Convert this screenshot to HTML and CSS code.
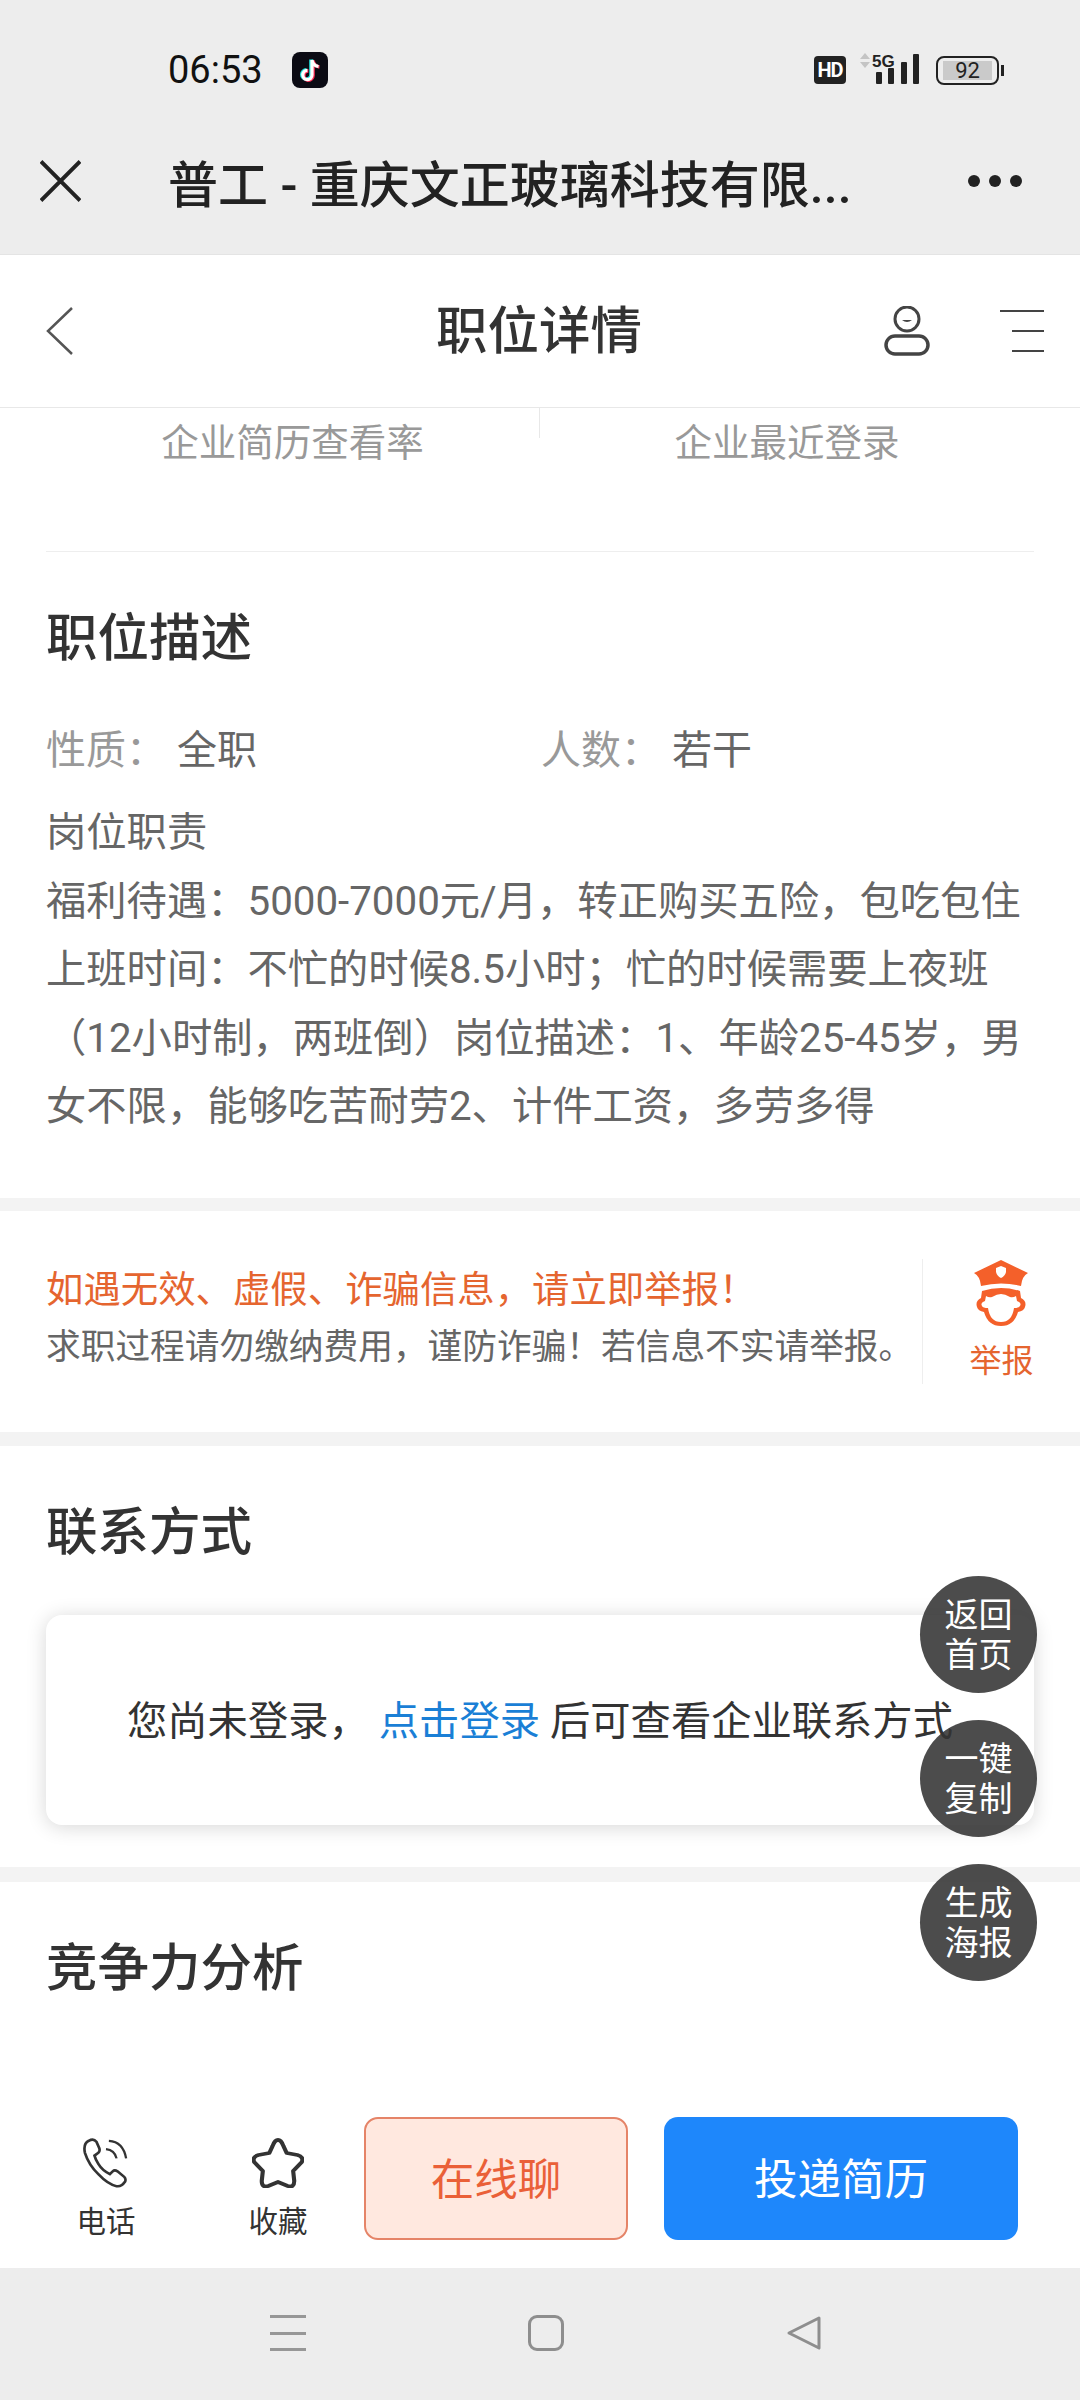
FILE: index.html
```html
<!DOCTYPE html>
<html lang="zh-CN">

<head>
    <meta charset="UTF-8">
    <meta name="viewport" content="width=device-width, initial-scale=1.0">
    <title>职位详情</title>
    <link rel="stylesheet" href="styles.css">
</head>

<body>
    <div class="screen">
        <div class="browser-bar">
            <div class="status-bar">
                <span class="time">06:53</span>
                <svg class="app-icon" viewBox="0 0 36 36">
                    <rect width="36" height="36" rx="8" fill="#0b0b14" />
                    <path d="M20 8v15a4.6 4.6 0 1 1-4.6-4.6M20 8c.6 3.500 3 6 6.500 6.500" fill="none" stroke="#25e4e0" stroke-width="3.600" transform="translate(-1 -.5)" />
                    <path d="M20 8v15a4.6 4.6 0 1 1-4.6-4.6M20 8c.6 3.500 3 6 6.500 6.500" fill="none" stroke="#fe2c55" stroke-width="3.600" transform="translate(1 .5)" />
                    <path d="M20 8v15a4.6 4.6 0 1 1-4.6-4.6M20 8c.6 3.500 3 6 6.500 6.500" fill="none" stroke="#fff" stroke-width="3.200" />
                </svg>
                <div class="status-right">
                    <span class="hd">HD</span>
                    <svg class="signal" viewBox="0 0 62 34">
                        <path d="M7 0l5 6H2zM7 15L2 9h10z" fill="#c4c4c4" />
                        <text x="14" y="14" class="signal-text">5G</text>
                        <rect x="18" y="19" width="6" height="12" rx="1" fill="#222" />
                        <rect x="30" y="15" width="6" height="16" rx="1" fill="#222" />
                        <rect x="43" y="9" width="6" height="22" rx="1" fill="#222" />
                        <rect x="55" y="1" width="6" height="30" rx="1" fill="#222" />
                    </svg>
                    <div class="battery">
                        <div class="battery-level">92</div>
                    </div>
                    <span class="battery-tip"></span>
                </div>
            </div>
            <div class="title-bar">
                <svg class="close-icon" viewBox="0 0 42 42">
                    <path d="M1 1l40 40M41 1L1 41" stroke="#222" stroke-width="4" fill="none" />
                </svg>
                <div class="page-name">普工 - 重庆文正玻璃科技有限...</div>
                <div class="dots"><span></span><span></span><span></span></div>
            </div>
        </div>

        <div class="nav">
            <svg class="back-icon" viewBox="0 0 28 48">
                <path d="M26 1L2 24l24 23" stroke="#555" stroke-width="2.500" fill="none" />
            </svg>
            <h1 class="nav-title">职位详情</h1>
            <svg class="user-icon" viewBox="0 0 46 50">
                <circle cx="23" cy="13" r="12" stroke="#444" stroke-width="3" fill="none" />
                <path d="M18 14q5 4 10 0z" fill="#444" />
                <rect x="2" y="30" width="42" height="18" rx="9" stroke="#444" stroke-width="3.500" fill="none" />
            </svg>
            <div class="menu-icon"><span></span><span></span><span></span></div>
        </div>

        <div class="content">
            <div class="stats">
                <div class="stat stat-first">企业简历查看率</div>
                <div class="stat">企业最近登录</div>
            </div>

            <div class="section desc-section">
                <h2 class="section-title">职位描述</h2>
                <div class="meta">
                    <div class="meta-item"><span class="meta-label">性质：</span>全职</div>
                    <div class="meta-item"><span class="meta-label">人数：</span>若干</div>
                </div>
                <p class="desc">岗位职责<br>福利待遇：5000-7000元/月，转正购买五险，包吃包住<br>上班时间：不忙的时候8.5小时；忙的时候需要上夜班<br>（12小时制，两班倒）岗位描述：1、年龄25-45岁，男<br>女不限，能够吃苦耐劳2、计件工资，多劳多得</p>
            </div>

            <div class="report">
                <div class="report-text">
                    <div class="report-warn">如遇无效、虚假、诈骗信息，请立即举报！</div>
                    <div class="report-note">求职过程请勿缴纳费用，谨防诈骗！若信息不实请举报。</div>
                </div>
                <div class="report-btn">
                    <svg class="police-icon" viewBox="0 0 56 68">
                        <path d="M28 1l27 13q-6 3-7 13-20-5-40 0Q7 17 1 14z" fill="#f4602a" />
                        <path d="M23 9l5-2 5 2v4q-1 4-5 6-4-2-5-6z" fill="#fff" />
                        <path d="M9 32q19-6 38 0l1 7q6 3 4 9-1 4-7 5-4 14-17 14T11 53q-6-1-7-5-2-6 4-9z" fill="#f4602a" />
                        <path d="M13 37q3 2 6 1 5-3 9-3t9 3q3 1 6-1l1 5q5 2 3 5-1 2-6 2-2 14-13 14T15 49q-5 0-6-2-2-3 3-5z" fill="#fff" />
                    </svg>
                    <span class="report-label">举报</span>
                </div>
            </div>

            <div class="section contact-section">
                <h2 class="section-title">联系方式</h2>
                <div class="login-card">您尚未登录， <a class="login-link">点击登录</a> 后可查看企业联系方式</div>
            </div>

            <div class="section rival-section">
                <h2 class="section-title">竞争力分析</h2>
            </div>
        </div>

        <div class="float-btns">
            <div class="float-btn float-home">返回<br>首页</div>
            <div class="float-btn float-copy">一键<br>复制</div>
            <div class="float-btn float-poster">生成<br>海报</div>
        </div>

        <div class="action-bar">
            <div class="action-item">
                <svg class="phone-icon" viewBox="0 0 48 54" preserveAspectRatio="none">
                    <path d="M6 3q-6 3-4 13 4 13 14 23 10 11 19 13 5 1 9-5 1-3-1-5l-7-6q-3-2-5 0l-3 3q-8-4-12-11-3-5-4-9l4-3q2-2 1-5L14 4q-3-4-8-1z" stroke="#333" stroke-width="2.800" fill="none" />
                    <path d="M24 12q9 1 11 10M27 3q15 1 18 19" stroke="#333" stroke-width="2.400" fill="none" />
                </svg>
                <span class="action-label">电话</span>
            </div>
            <div class="action-item">
                <svg class="star-icon" viewBox="1 1 48 50" preserveAspectRatio="none">
                    <path d="M25 3q3 0 5 6l3 7 10 2q6 2 4 7l-8 9 1 10q0 7-6 5l-9-4-9 4q-6 2-6-5l1-10-8-9q-2-5 4-7l10-2 3-7q2-6 5-6z" stroke="#333" stroke-width="3.800" stroke-linejoin="round" fill="none" />
                </svg>
                <span class="action-label">收藏</span>
            </div>
            <button class="chat-btn">在线聊</button>
            <button class="apply-btn">投递简历</button>
        </div>

        <div class="system-nav">
            <div class="sys-menu"><span></span><span></span><span></span></div>
            <div class="sys-home"></div>
            <svg class="sys-back" viewBox="0 0 36 36">
                <path d="M33 3L3 18l30 15z" stroke="#8e8e8e" stroke-width="3" stroke-linejoin="round" fill="none" />
            </svg>
        </div>
    </div>
</body>

</html>
```

FILE: styles.css
```css
* {
    box-sizing: border-box;
}

body {
    margin: 0;
    font-family: Roboto, "Noto Sans CJK SC", sans-serif;
    color: #333;
    background-color: #fff;
}

.screen {
    position: relative;
    width: 1080px;
    height: 2400px;
    display: flex;
    flex-direction: column;
    overflow: hidden;
}

/* top bars */
.browser-bar {
    height: 254px;
    background-color: #ededed;
}

.status-bar {
    height: 108px;
    padding: 32px 0 0 168px;
    display: flex;
    align-items: center;
}

.time {
    width: 124px;
    font-size: 38px;
    color: #111;
}

.app-icon {
    width: 36px;
    height: 36px;
}

.status-right {
    margin-left: auto;
    padding-right: 76px;
    display: flex;
    align-items: center;
}

.hd {
    width: 32px;
    height: 28px;
    border-radius: 4px;
    background-color: #222;
    color: #fff;
    font-size: 20px;
    font-weight: 700;
    line-height: 28px;
    text-align: center;
    letter-spacing: -1px;
}

.signal {
    width: 62px;
    height: 34px;
    margin-left: 12px;
}

.signal-text {
    font-family: "Liberation Sans", sans-serif;
    font-size: 17px;
    font-weight: 700;
    fill: #222;
}

.battery {
    width: 63px;
    height: 29px;
    margin-left: 16px;
    padding: 3px 5px;
    border: 2px solid #222;
    border-radius: 8px;
}

.battery-level {
    height: 19px;
    background-color: #cacaca;
    font-size: 22px;
    line-height: 19px;
    text-align: center;
    color: #222;
}

.battery-tip {
    width: 3px;
    height: 11px;
    margin-left: 2px;
    background-color: #222;
}

.title-bar {
    height: 146px;
    padding: 0 58px 0 40px;
    display: flex;
    align-items: center;
}

.close-icon {
    width: 41px;
    height: 42px;
    flex-shrink: 0;
}

.page-name {
    margin-left: 87px;
    font-size: 50px;
    font-weight: 500;
    color: #222;
    white-space: nowrap;
}

.dots {
    margin-left: auto;
    display: flex;
    gap: 9px;
}

.dots span {
    width: 12px;
    height: 12px;
    border-radius: 50%;
    background-color: #222;
}

.nav {
    position: relative;
    height: 154px;
    padding-left: 46px;
    background-color: #fff;
    border-bottom: 1px solid #e8e8e8;
    border-top: 1px solid #e4e4e4;
    display: flex;
    align-items: center;
}

.back-icon {
    width: 28px;
    height: 48px;
}

.nav-title {
    width: 206px;
    margin: 2px 0 0 362px;
    font-size: 51.500px;
    font-weight: 500;
    line-height: 60px;
    white-space: nowrap;
}

.user-icon {
    width: 46px;
    height: 50px;
    margin-left: 242px;
}

.menu-icon {
    width: 44px;
    margin-left: 70px;
    display: flex;
    flex-direction: column;
    align-items: flex-end;
    gap: 18px;
}

.menu-icon span {
    width: 32px;
    height: 2px;
    background-color: #444;
}

.menu-icon span:first-child {
    width: 44px;
}

/* scrolled content */
.content {
    flex: 1;
    overflow: hidden;
}

.stats {
    margin: 0 46px;
    padding-bottom: 113px;
    border-bottom: 1px solid #eee;
    display: grid;
    grid-template-columns: 1fr 1fr;
}

.stat {
    height: 30px;
    font-size: 37.500px;
    line-height: 70px;
    color: #999;
    text-align: center;
    white-space: nowrap;
}

.stat-first {
    border-right: 1px solid #e8e8e8;
}

.section {
    padding: 54px 46px 0;
}

.section-title {
    margin: 0;
    font-size: 51.500px;
    font-weight: 500;
    line-height: 60px;
}

.desc-section {
    padding-top: 57px;
    padding-bottom: 56px;
    border-bottom: 13px solid #f3f3f3;
}

.meta {
    margin-top: 47px;
    display: grid;
    grid-template-columns: 495px 1fr;
}

.meta-item {
    font-size: 40px;
    line-height: 69px;
    color: #666;
}

.meta-label {
    display: inline-block;
    width: 131px;
    color: #999;
}

.desc {
    margin: 14px 0 0;
    font-size: 40.300px;
    line-height: 68.500px;
    color: #666;
    white-space: nowrap;
}

.report {
    height: 235px;
    padding: 48px 0 0 46px;
    border-bottom: 14px solid #f3f3f3;
    display: flex;
    align-items: flex-start;
}

.report-text {
    width: 877px;
    padding-top: 6px;
    height: 125px;
    border-right: 1px solid #eee;
}

.report-warn {
    font-size: 37.400px;
    line-height: 50px;
    color: #e5652f;
    white-space: nowrap;
}

.report-note {
    margin-top: 7px;
    font-size: 34.700px;
    line-height: 50px;
    color: #666;
    white-space: nowrap;
}

.report-btn {
    flex: 1;
    display: flex;
    flex-direction: column;
    align-items: center;
}

.police-icon {
    width: 56px;
    height: 68px;
    margin-left: -1px;
}

.report-label {
    margin-top: 12px;
    font-size: 32px;
    line-height: 44px;
    color: #e5652f;
}

.contact-section {
    padding-top: 57px;
    padding-bottom: 42px;
    border-bottom: 15px solid #f3f3f3;
}

.login-card {
    height: 210px;
    margin-top: 52px;
    border-radius: 16px;
    background-color: #fff;
    box-shadow: 0 2px 20px rgba(0, 0, 0, 0.16);
    font-size: 40.300px;
    line-height: 214px;
    text-align: center;
    white-space: nowrap;
}

.login-link {
    color: #1a7fd6;
}

.rival-section {
    padding-top: 57px;
}

/* floating buttons over the content */
.float-btns {
    position: absolute;
    left: 920px;
    top: 1576px;
    width: 117px;
}

.float-btn {
    width: 117px;
    height: 117px;
    margin-bottom: 27px;
    padding-top: 19px;
    border-radius: 50%;
    background-color: rgba(51, 51, 51, 0.88);
    color: #fff;
    font-size: 34px;
    line-height: 40px;
    text-align: center;
}

.action-bar {
    height: 168px;
    padding: 17px 62px 28px 20px;
    background-color: #fff;
    display: flex;
}

.action-item {
    width: 172px;
    padding-top: 21px;
    display: flex;
    flex-direction: column;
    align-items: center;
}

.phone-icon {
    width: 46px;
    height: 50px;
    flex-shrink: 0;
}

.star-icon {
    width: 52px;
    height: 50px;
    flex-shrink: 0;
}

.action-label {
    margin-top: 13px;
    font-size: 29.500px;
    line-height: 42px;
    color: #333;
    flex-shrink: 0;
}

.chat-btn,
.apply-btn {
    height: 123px;
    padding-bottom: 6px;
    border-radius: 14px;
    font-family: inherit;
    font-size: 43.500px;
}

.chat-btn {
    width: 264px;
    border: 2px solid #e58468;
    background-color: #ffe8df;
    color: #ea6038;
}

.apply-btn {
    width: 354px;
    margin-left: 36px;
    border: none;
    background-color: #1e87fb;
    color: #fff;
}

.system-nav {
    height: 132px;
    background-color: #ededed;
    padding: 47px 0 0 270px;
    display: flex;
    align-items: flex-start;
}

.sys-menu {
    width: 36px;
    height: 36px;
    display: flex;
    flex-direction: column;
    justify-content: space-between;
}

.sys-menu span {
    height: 3px;
    background-color: #979797;
}

.sys-home {
    width: 36px;
    height: 36px;
    margin-left: 222px;
    border: 3px solid #8e8e8e;
    border-radius: 9px;
}

.sys-back {
    width: 36px;
    height: 36px;
    margin-left: 222px;
}
```
